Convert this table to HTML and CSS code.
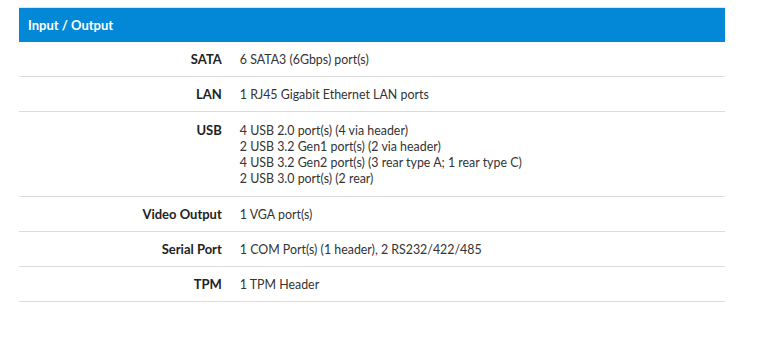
FILE: index.html
```html
<!DOCTYPE html>
<html>
<head>
<meta charset="utf-8">
<link rel="stylesheet" href="styles.css">
</head>
<body>
<div class="page">
  <table class="spec">
    <thead>
      <tr><th colspan="2" class="head">Input / Output</th></tr>
    </thead>
    <tbody>
      <tr><td class="label">SATA</td><td class="value">6 SATA3 (6Gbps) port(s)</td></tr>
      <tr><td class="label">LAN</td><td class="value">1 RJ45 Gigabit Ethernet LAN ports</td></tr>
      <tr class="multi"><td class="label">USB</td><td class="value">4 USB 2.0 port(s) (4 via header)<br>2 USB 3.2 Gen1 port(s) (2 via header)<br>4 USB 3.2 Gen2 port(s) (3 rear type A; 1 rear type C)<br>2 USB 3.0 port(s) (2 rear)</td></tr>
      <tr><td class="label">Video Output</td><td class="value">1 VGA port(s)</td></tr>
      <tr><td class="label">Serial Port</td><td class="value">1 COM Port(s) (1 header), 2 RS232/422/485</td></tr>
      <tr><td class="label">TPM</td><td class="value">1 TPM Header</td></tr>
    </tbody>
  </table>
</div>
</body>
</html>
```

FILE: styles.css
```css
html, body {
  margin: 0;
  padding: 0;
  background: #fff;
}
.page {
  padding: 7px 33px 0 19px;
}
.spec {
  width: 706px;
  border-collapse: collapse;
  font-family: Lato, "Open Sans", sans-serif;
  font-size: 13px;
  line-height: 16px;
  color: #333;
  border-top: 1px solid #e3e3e3;
}
.head {
  background: #0288d7;
  color: #fff;
  text-align: left;
  font-weight: 700;
  padding: 9px 9px 9px 9px;
  line-height: 16px;
}
.spec td {
  border-bottom: 1px solid #dcdcdc;
  padding: 9px 9px 9px 9px;
  vertical-align: top;
}
.spec td.value {
  padding-top: 10px;
  padding-bottom: 8px;
}
.spec .multi td {
  padding-top: 10px;
  padding-bottom: 10px;
}
.spec .multi td.value {
  padding-top: 11px;
  padding-bottom: 9px;
}
.label {
  width: 30%;
  text-align: right;
  font-weight: 700;
  color: #222;
  padding-right: 10px;
}
.value {
  text-align: left;
  font-size: 12.4px;
}
```
